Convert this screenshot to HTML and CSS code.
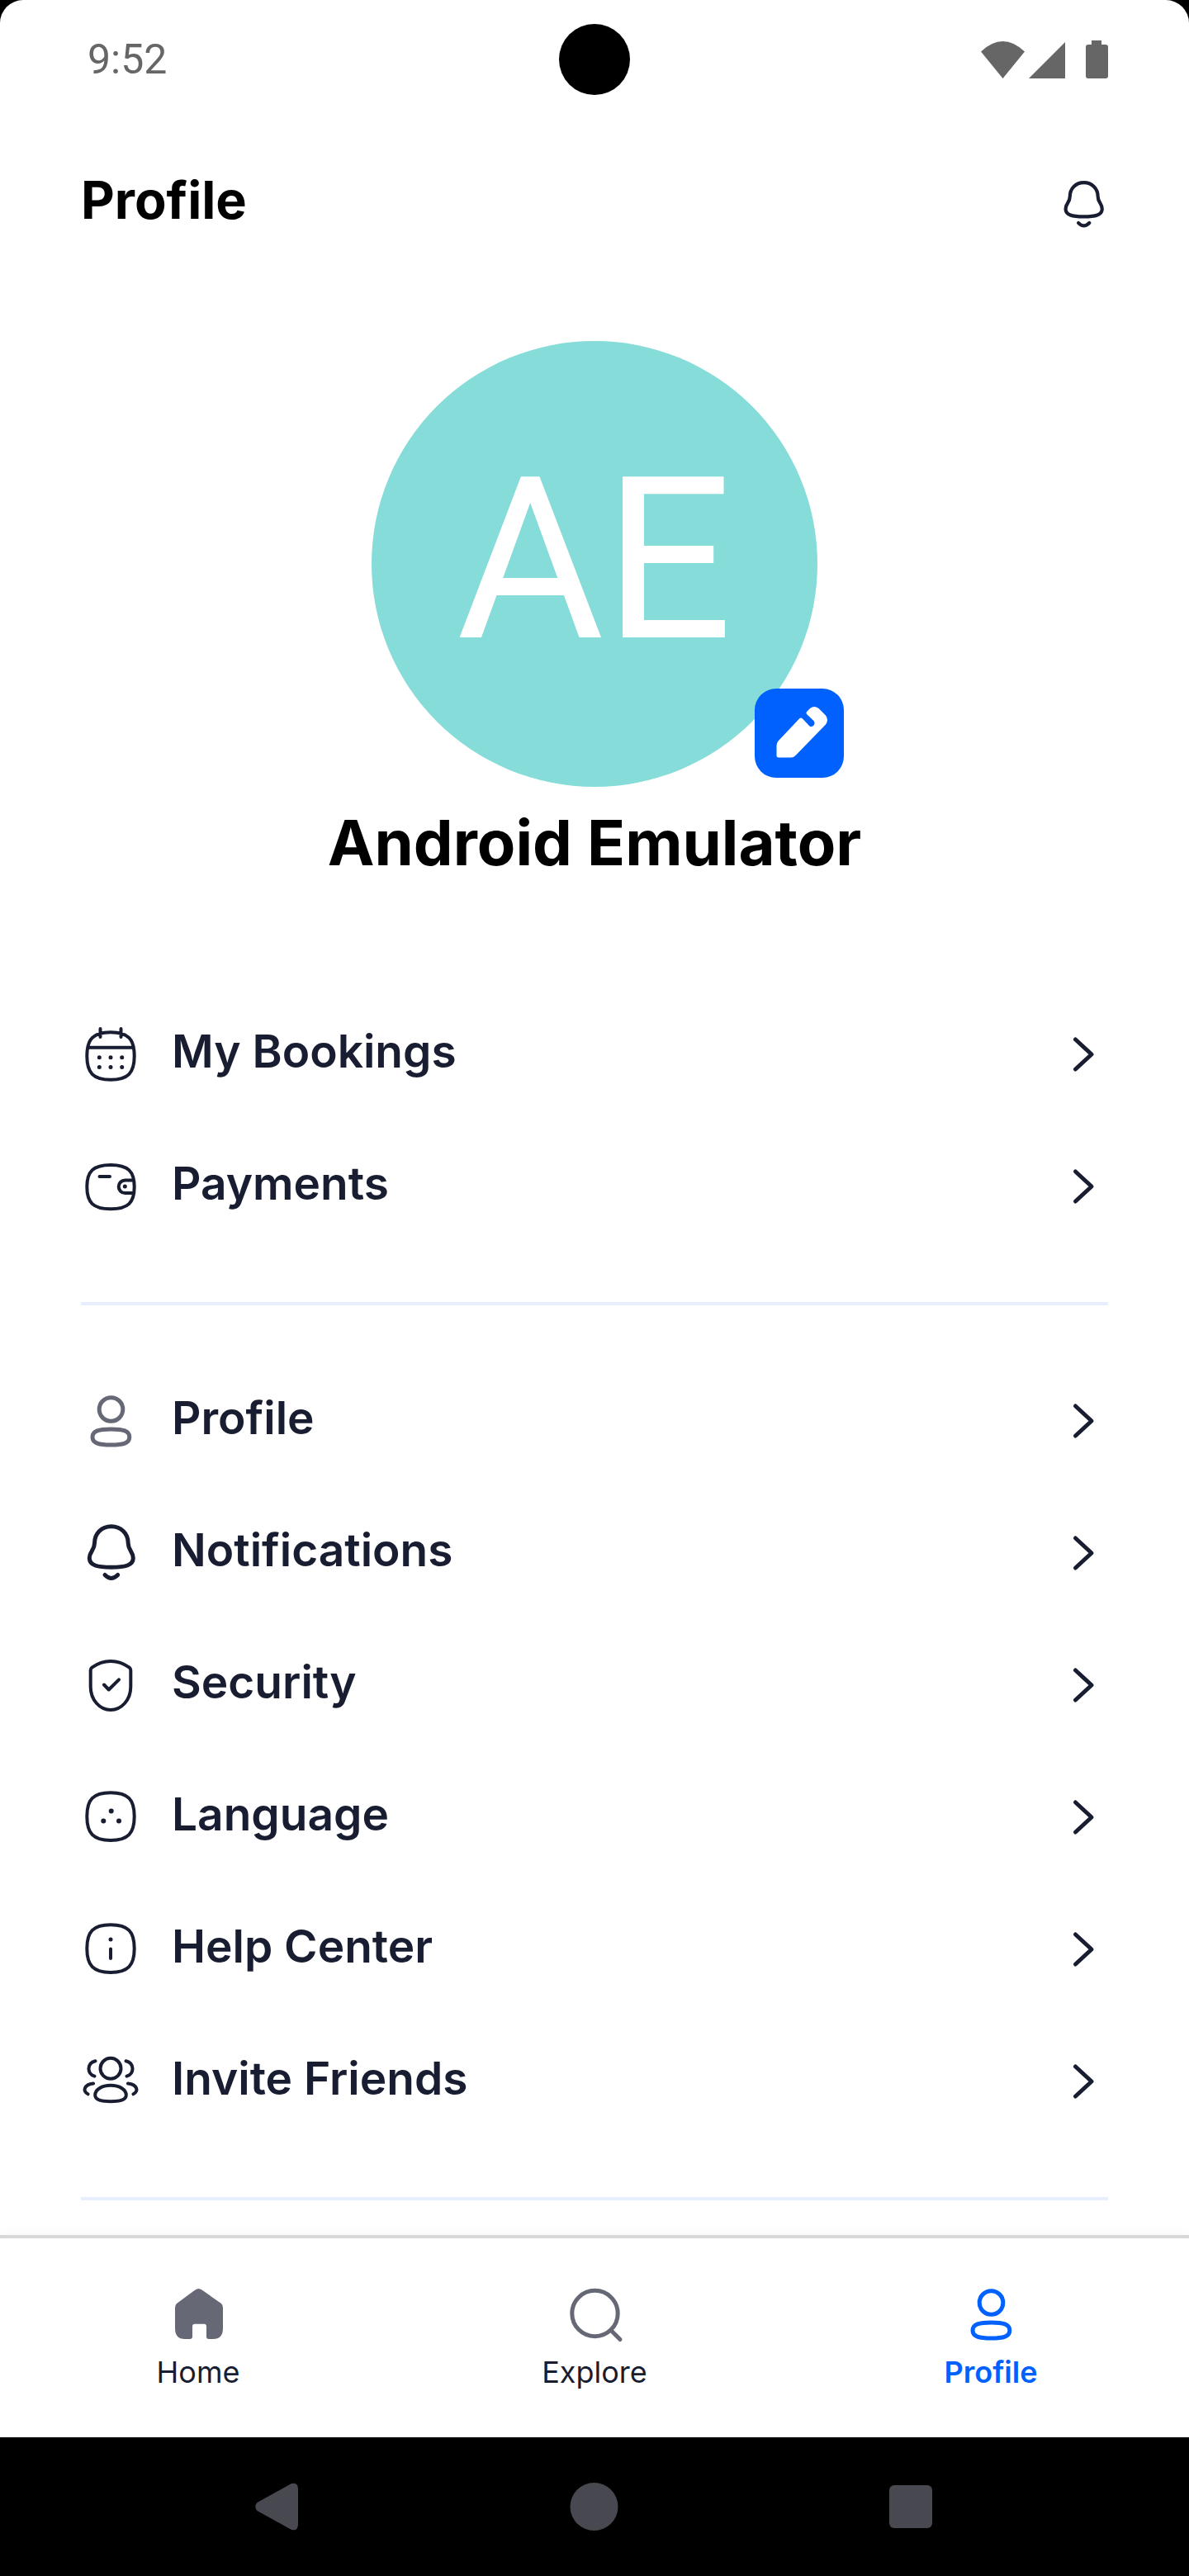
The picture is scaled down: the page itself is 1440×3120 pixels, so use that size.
FILE: index.html
```html
<!DOCTYPE html>
<html lang="en">
<head>
<meta charset="utf-8">
<meta name="viewport" content="width=device-width, initial-scale=1">
<title>Profile</title>
<link rel="stylesheet" href="styles.css">
</head>
<body>
<svg class="sprite" aria-hidden="true">
  <symbol id="bell" viewBox="0 0 72 72"><path d="M36.8 3.7C25 3.7 16.500 12.500 16.500 24C16.500 33 10.300 34 10.300 42C10.300 51 20 53.300 36.800 53.300S63.300 51 63.300 42C63.300 34 57.200 33 57.200 24C57.200 12.500 48.500 3.700 36.800 3.700ZM29 62.500Q36.800 70.500 44.700 62.500"/></symbol>
  <symbol id="calendar" viewBox="0 0 72 72"><path d="M36 9.300C57 9.300 64.700 17.500 64.700 38S57 66.700 36 66.700S7.300 58.500 7.300 38S15 9.300 36 9.300ZM8.500 27.700H63.500M23.500 5V15M48.500 5V15"/><path class="dots" d="M22.300 39.700h.01M36 39.700h.01M49.700 39.700h.01M22.300 51.500h.01M36 51.500h.01M49.700 51.500h.01"/></symbol>
  <symbol id="wallet" viewBox="0 0 72 72"><path d="M36 10C57 10 64.700 17.500 64.700 36.600S57 63.300 36 63.300S7.300 55.700 7.300 36.600S15 10 36 10ZM22.500 24H35M63.500 28.500H53.500a7.800 7.800 0 0 0 0 15.600H63.500"/><path class="dots" d="M53.300 36h.01"/></symbol>
  <symbol id="person" viewBox="0 0 72 72"><circle cx="36.500" cy="22" r="14.300"/><path d="M36.500 46C51 46 58.800 48 58.800 55.500S51 65 36.500 65S14 63 14 55.500S22 46 36.500 46Z"/></symbol>
  <symbol id="shield" viewBox="0 0 72 72"><path d="M36 7Q48 7 58.600 14.600Q60.300 15.900 60.300 18V38C60.300 54 49 66 36 66S11.700 54 11.700 38V18Q11.700 15.900 13.400 14.600Q24 7 36 7ZM28 35.500L33.700 41.500L46 29.300"/></symbol>
  <symbol id="language" viewBox="0 0 72 72"><path d="M36 6.300C57 6.300 64.700 14.500 64.700 35S57 64 36 64S7.300 55.500 7.300 35S15 6.300 36 6.300Z"/><path class="dots big" d="M36.700 28.500h.01M27.300 40.500h.01M46 40.500h.01"/></symbol>
  <symbol id="info" viewBox="0 0 72 72"><path d="M36 6.300C57 6.300 64.700 14.500 64.700 35S57 64 36 64S7.300 55.500 7.300 35S15 6.300 36 6.300ZM36 35.500V47"/><path class="dots" d="M36 24h.01"/></symbol>
  <symbol id="friends" viewBox="0 0 72 72"><circle cx="36" cy="20.300" r="12.500"/><path d="M36 40.800C47 40.800 54.800 46 54.800 52.500C54.800 58.500 47 60.200 36 60.200S17.200 58.500 17.200 52.500C17.200 46 25 40.800 36 40.800ZM17.500 11.300C7 14 7 26.500 16.500 29.700M54.500 11.300C65 14 65 26.500 55.500 29.700M15 38.500C4 39.500 1.500 48 8.500 51.300M57 38.500C68 39.500 70.500 48 63.500 51.300"/></symbol>
  <symbol id="chevron" viewBox="0 0 60 60"><path d="M20.500 12L40 30L20.500 48"/></symbol>
  <symbol id="search" viewBox="0 0 72 72"><circle cx="36.500" cy="35" r="27.700"/><path d="M56.500 56L67 66.500"/></symbol>
  <symbol id="house" viewBox="0 0 72 72"><path d="M31 7.500Q36.500 2.500 42 7.500L64 23Q66 25 66 28V53Q66 66 54 66H49Q46 66 46 63V51Q46 47.700 43 47.700H32Q29 47.700 29 51V63Q29 66 26 66H20Q8 66 8 53V28Q8 25 10 23Z"/></symbol>
</svg>

<div class="screen">
  <div class="statusbar">
    <time class="clock">9:52</time>
    <span class="camera"></span>
    <svg class="indicators" viewBox="0 0 154 46" role="img" aria-label="Wi-Fi, signal and battery">
      <path d="M0 13.500Q26.500-11.500 53 13.500L26.500 46ZM58 46L102 2V46ZM127 8Q127 5 130 5H134V0H146V5H151Q154 5 154 8V43Q154 46 151 46H130Q127 46 127 43Z"/>
    </svg>
  </div>

  <header class="header">
    <h1 class="title">Profile</h1>
    <button class="bell-button" type="button" aria-label="Notifications"><svg class="icon small bold"><use href="#bell"/></svg></button>
  </header>

  <main class="content">
    <section class="hero">
      <div class="avatar">
        <span class="initials">AE</span>
        <button class="edit" type="button" aria-label="Edit picture">
          <svg class="pencil" viewBox="0 0 108 108"><path d="M26.500 81V69Q26.500 66 28.500 63.500L54 36.500Q56 34.500 58 36.500L66.500 45.500Q69 47 71.500 44.500Q73.500 42 71.500 39L63.500 31.500Q61.500 29.500 63.500 27.500L67 24Q72 20 77.500 24L86 32.500Q90 38 86 43.500L50 80.500Q47.500 83.500 44 83.500H29Q26.500 83.500 26.500 81Z"/></svg>
        </button>
      </div>
      <h2 class="name">Android Emulator</h2>
    </section>

    <nav class="menu" aria-label="Account">
      <a class="row" href="#"><svg class="icon"><use href="#calendar"/></svg><span class="label">My Bookings</span><svg class="icon small bold"><use href="#chevron"/></svg></a>
      <a class="row" href="#"><svg class="icon"><use href="#wallet"/></svg><span class="label">Payments</span><svg class="icon small bold"><use href="#chevron"/></svg></a>
    </nav>
    <nav class="menu" aria-label="Settings">
      <a class="row" href="#"><svg class="icon muted bold"><use href="#person"/></svg><span class="label">Profile</span><svg class="icon small bold"><use href="#chevron"/></svg></a>
      <a class="row" href="#"><svg class="icon bold"><use href="#bell"/></svg><span class="label">Notifications</span><svg class="icon small bold"><use href="#chevron"/></svg></a>
      <a class="row" href="#"><svg class="icon"><use href="#shield"/></svg><span class="label">Security</span><svg class="icon small bold"><use href="#chevron"/></svg></a>
      <a class="row" href="#"><svg class="icon"><use href="#language"/></svg><span class="label">Language</span><svg class="icon small bold"><use href="#chevron"/></svg></a>
      <a class="row" href="#"><svg class="icon"><use href="#info"/></svg><span class="label">Help Center</span><svg class="icon small bold"><use href="#chevron"/></svg></a>
      <a class="row" href="#"><svg class="icon"><use href="#friends"/></svg><span class="label">Invite Friends</span><svg class="icon small bold"><use href="#chevron"/></svg></a>
    </nav>
  </main>

  <nav class="tabbar" aria-label="Main">
    <a class="tab" href="#"><svg class="icon muted solid"><use href="#house"/></svg><span>Home</span></a>
    <a class="tab" href="#"><svg class="icon muted bold"><use href="#search"/></svg><span>Explore</span></a>
    <a class="tab active" href="#" aria-current="page"><svg class="icon bold"><use href="#person"/></svg><span>Profile</span></a>
  </nav>
</div>

<div class="sysnav">
  <button class="key" type="button" aria-label="Back"><svg class="glyph" viewBox="0 0 60 60"><path d="M5.500 35Q1 30 5.500 25L47 2Q55 0 55 9V51Q55 60 47 58Z"/></svg></button>
  <button class="key" type="button" aria-label="Home"><svg class="glyph" viewBox="0 0 60 60"><circle cx="29.500" cy="30" r="29"/></svg></button>
  <button class="key" type="button" aria-label="Recent apps"><svg class="glyph" viewBox="0 0 60 60"><rect x="3" y="4" width="52" height="52" rx="6"/></svg></button>
</div>
</body>
</html>
```
FILE: styles.css
```css
* {
  box-sizing: border-box;
}

body {
  margin: 0;
  min-height: 100vh;
  display: flex;
  flex-direction: column;
  background: #000;
  color: #191d31;
  font-family: Inter, "Liberation Sans", sans-serif;
}

a {
  color: inherit;
  text-decoration: none;
}

button {
  padding: 0;
  border: 0;
  background: none;
  color: inherit;
  display: grid;
  place-items: center;
}

.sprite {
  display: none;
}

.screen {
  flex: 1;
  display: flex;
  flex-direction: column;
  background: #fff;
  border-radius: 28px 28px 0 0;
}

.icon {
  display: block;
  flex: none;
  width: 72px;
  height: 72px;
  fill: none;
  stroke: currentColor;
  stroke-width: 4;
  stroke-linecap: round;
  stroke-linejoin: round;
}

.bold {
  stroke-width: 5;
}

.small {
  width: 60px;
  height: 60px;
}

.muted {
  color: #666876;
}

.solid {
  fill: currentColor;
  stroke: none;
}

.dots {
  stroke-width: 5;
}

.big {
  stroke-width: 6;
}

/* Status bar */
.statusbar {
  height: 144px;
  padding: 0 98px;
  display: grid;
  grid-template-columns: 1fr auto 1fr;
  align-items: center;
}

.clock {
  padding-left: 8px;
  color: #666;
  font: 400 50px/60px Roboto, "Liberation Sans", sans-serif;
}

.camera {
  width: 86px;
  height: 86px;
  border-radius: 50%;
  background: #000;
}

.indicators {
  justify-self: end;
  width: 154px;
  height: 46px;
  fill: #666;
}

/* Header */
.header {
  height: 208px;
  padding: 0 98px;
  display: flex;
  align-items: center;
  justify-content: space-between;
}

.title {
  margin: 0;
  padding-bottom: 12px;
  color: #000;
  font-size: 63px;
  line-height: 72px;
  font-weight: 700;
}

/* Avatar and name */
.content {
  flex: 1;
  padding-bottom: 41px;
}

.hero {
  padding: 61px 0 72px;
  display: flex;
  flex-direction: column;
  align-items: center;
}

.avatar {
  position: relative;
  width: 540px;
  height: 540px;
  border-radius: 50%;
  background: #86dcd8;
  display: grid;
  place-items: center;
}

.initials {
  padding-bottom: 8px;
  color: #fff;
  font: 400 274px/320px Roboto, "Liberation Sans", sans-serif;
}

.edit {
  position: absolute;
  right: -32px;
  bottom: 11px;
  width: 108px;
  height: 108px;
  border-radius: 26px;
  background: #0061ff;
}

.pencil {
  width: 108px;
  height: 108px;
  fill: #fff;
}

.name {
  margin: 22px 0 0;
  color: #000;
  font-size: 76px;
  line-height: 90px;
  font-weight: 700;
}

/* Menu */
.menu {
  margin: 0 98px;
  padding: 60px 0;
  border-bottom: 4px solid #e6eeff;
}

.row {
  height: 160px;
  display: flex;
  align-items: center;
}

.label {
  flex: 1;
  padding: 0 38px 8px;
  font-size: 55px;
  line-height: 64px;
  font-weight: 600;
}

/* Tab bar */
.tabbar {
  padding: 56px 0 57px;
  border-top: 4px solid #d8d8d8;
  box-shadow: 0 -4px 12px rgba(0, 0, 0, 0.03);
  display: grid;
  grid-template-columns: repeat(3, 1fr);
}

.tab {
  display: flex;
  flex-direction: column;
  align-items: center;
  gap: 12px;
  font-size: 36px;
  line-height: 44px;
}

.active {
  color: #0061ff;
  font-weight: 600;
}

/* System navigation */
.sysnav {
  height: 168px;
  padding: 0 10%;
  display: grid;
  grid-template-columns: repeat(3, 1fr);
}

.glyph {
  width: 60px;
  height: 60px;
  fill: #484850;
}
```
